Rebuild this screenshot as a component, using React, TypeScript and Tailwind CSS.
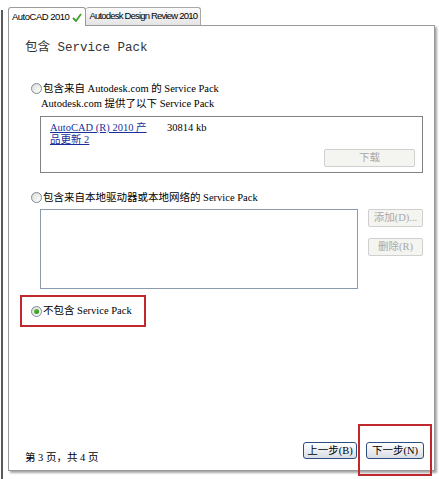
import React from "react";

// Installer wizard page: choose whether to include a Service Pack.

const serif = {
  fontFamily: '"Liberation Serif", "Noto Sans CJK SC", serif',
};
const mono = {
  fontFamily: '"Liberation Mono", "Noto Sans CJK SC", monospace',
};

function Radio({ checked = false }: { checked?: boolean }) {
  return (
    <span className="flex h-[11px] w-[11px] shrink-0 items-center justify-center rounded-full border border-[#7d8a97] bg-gradient-to-br from-[#dcdcd6] to-white">
      {checked && (
        <span className="h-[5px] w-[5px] rounded-full bg-gradient-to-br from-[#5fcc3a] to-[#218c12]" />
      )}
    </span>
  );
}

function SideButton({ label }: { label: string }) {
  return (
    <div className="flex h-[18px] w-[55px] items-center justify-center whitespace-nowrap rounded-[2px] border border-[#cfcfcf] bg-[#f4f4f0] text-[10.5px] text-[#a8a8a8]">
      {label}
    </div>
  );
}

function NavButton({ label, width }: { label: string; width: string }) {
  return (
    <div
      className={`flex h-[17px] ${width} items-center justify-center whitespace-nowrap rounded-[3px] border border-[#2c4f7c] bg-gradient-to-b from-white to-[#d8dde6] text-[10.5px] text-black`}
    >
      {label}
    </div>
  );
}

export default function App() {
  return (
    <div className="relative h-[479px] w-[439px] overflow-hidden bg-white" style={serif}>
      {/* dark window edge on the left */}
      <div className="absolute left-[1px] top-[10px] h-[469px] w-[2px] bg-[#5a5a5a]" />

      <div className="flex flex-col pl-[8px] pt-[7px]">
        {/* tabs */}
        <div
          className="flex h-[18px] items-end whitespace-nowrap text-[9.5px]"
          style={{ fontFamily: '"Liberation Sans", Arial, sans-serif' }}
        >
          <div className="relative z-10 -mb-px flex h-[19px] items-center gap-[3px] rounded-t-[3px] border border-b-0 border-[#9a9a9a] bg-white px-[3px]">
            <span className="tracking-[-0.5px] text-black">AutoCAD 2010</span>
            <svg className="shrink-0" width="10" height="9" viewBox="0 0 10 9">
              <path d="M1 5 L4 8 L9 1" fill="none" stroke="#3fa02c" strokeWidth="1.8" />
            </svg>
          </div>
          <div className="flex h-[18px] items-center rounded-t-[3px] border border-b-0 border-l-0 border-[#a8a8a8] bg-gradient-to-b from-[#fbfbfb] to-[#e4e4e4] px-[3px]">
            <span className="tracking-[-0.8px] text-black">Autodesk Design Review 2010</span>
          </div>
        </div>

        {/* page panel */}
        <div className="flex h-[446px] w-[427px] flex-col border border-[#9a9a9a] bg-white shadow-[2px_2px_2px_rgba(0,0,0,0.35)]">
          <div className="ml-[16px] mt-[14px] text-[12.5px] leading-[16px] text-[#333]" style={mono}>
            包含 Service Pack
          </div>

          {/* option 1 */}
          <div className="ml-[22px] mt-[26px] flex items-center gap-[1px] whitespace-nowrap text-[10.5px] leading-[13px] text-black">
            <Radio />
            <span>包含来自 Autodesk.com 的 Service Pack</span>
          </div>
          <div className="ml-[32px] mt-[2px] whitespace-nowrap text-[10.5px] leading-[13px] text-black">
            Autodesk.com 提供了以下 Service Pack
          </div>
          <div className="ml-[31px] mt-[6px] flex h-[57px] w-[383px] flex-col border border-[#828282] px-[9px] pt-[5px]">
            <div className="flex text-[10.5px] leading-[12px]">
              <span className="w-[117px] text-[#1a2f9c] underline">
                AutoCAD (R) 2010 产<br />品更新 2
              </span>
              <span className="text-black">30814 kb</span>
            </div>
            <div className="mt-[3px] flex justify-end">
              <div className="-mr-[2px] flex h-[18px] w-[91px] items-center justify-center rounded-[2px] border border-[#cfcfcf] bg-[#f4f4f0] text-[10.5px] text-[#a8a8a8]">
                下载
              </div>
            </div>
          </div>

          {/* option 2 */}
          <div className="ml-[22px] mt-[18px] flex items-center gap-[1px] whitespace-nowrap text-[10.5px] leading-[13px] text-black">
            <Radio />
            <span>包含来自本地驱动器或本地网络的 Service Pack</span>
          </div>
          <div className="ml-[31px] mt-[5px] flex gap-[10px]">
            <div className="h-[80px] w-[318px] border border-[#8a9bab]" />
            <div className="flex flex-col gap-[11px]">
              <SideButton label="添加(D)..." />
              <SideButton label="删除(R)" />
            </div>
          </div>

          {/* option 3, outlined in red */}
          <div className="ml-[11px] mt-[6px] flex h-[32px] w-[126px] items-center gap-[1px] whitespace-nowrap border-2 border-[#c0282d] pl-[9px] text-[10.5px] text-black">
            <Radio checked />
            <span>不包含 Service Pack</span>
          </div>

          {/* footer */}
          <div className="mt-auto flex items-end justify-between pb-[11px] pl-[16px] pr-[10px]">
            <span className="-mb-[5px] whitespace-nowrap text-[10.5px] leading-[13px] text-black">第 3 页，共 4 页</span>
            <div className="flex items-end gap-[9px]">
              <NavButton label="上一步(B)" width="w-[54px]" />
              <div className="relative">
                <NavButton label="下一步(N)" width="w-[58px]" />
                <span className="pointer-events-none absolute -bottom-[17px] -left-[8px] -right-[8px] -top-[18px] border-2 border-[#c0282d]" />
              </div>
            </div>
          </div>
        </div>
      </div>
    </div>
  );
}
